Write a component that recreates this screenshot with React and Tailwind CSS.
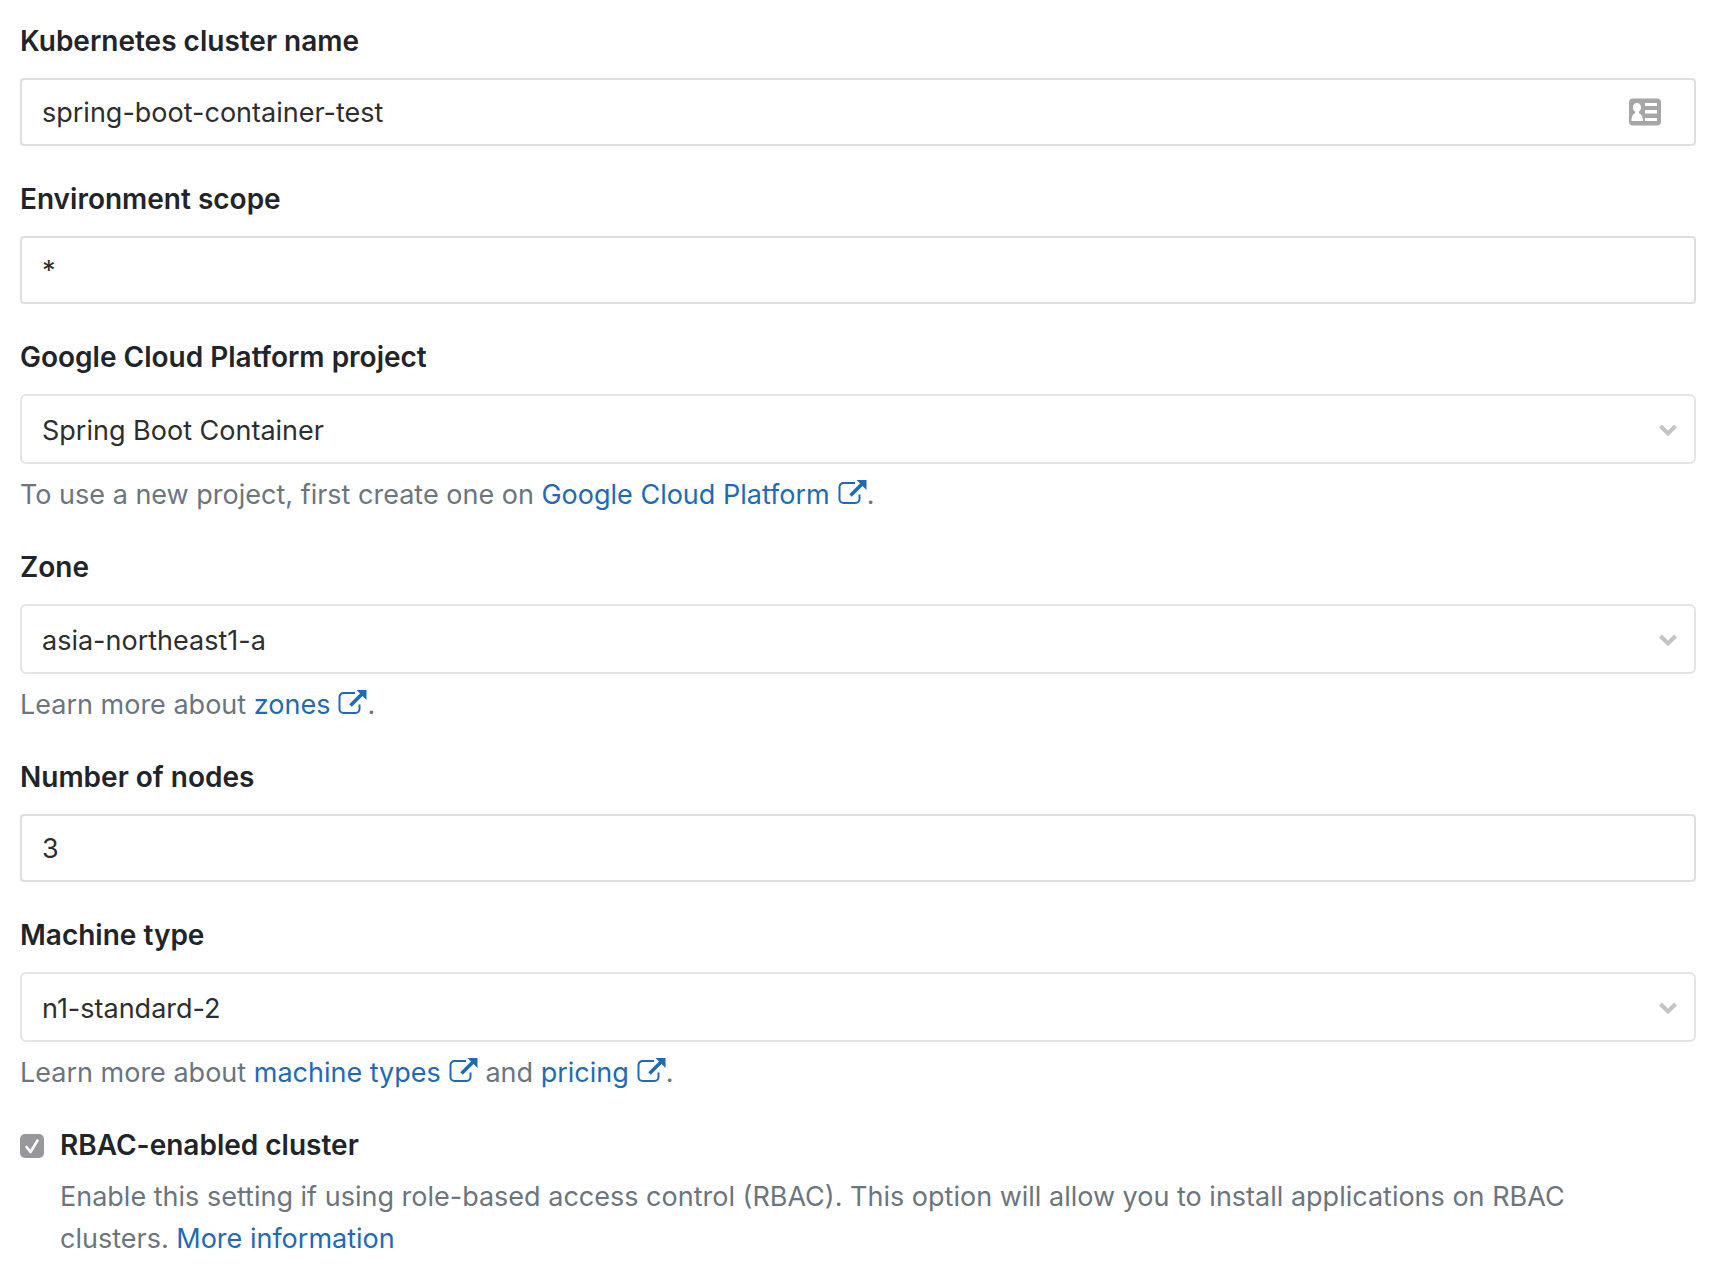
import React from "react";

function ExternalIcon() {
  return (
    <svg
      className="ml-2 inline-block h-7 w-[29px] align-[-3px]"
      viewBox="0 0 29 28"
      fill="none"
      aria-hidden="true"
    >
      <path
        d="M17 4H5.500A4 4 0 0 0 1.500 8v12a4 4 0 0 0 4 4H17.500a4 4 0 0 0 4-4v-4.500"
        stroke="currentColor"
        strokeWidth="2"
      />
      <path d="M12.500 16.500L24 5" stroke="currentColor" strokeWidth="3.600" />
      <path d="M18.500 1h10v10z" fill="currentColor" />
    </svg>
  );
}

function Link({ href, external, children }) {
  return (
    <a href={href} className="text-[#1f6ab6] hover:underline">
      {children}
      {external && <ExternalIcon />}
    </a>
  );
}

function Field({ id, label, help, children }) {
  return (
    <div className="flex flex-col">
      <label
        htmlFor={id}
        className="mb-4 self-start text-[28px] font-semibold text-[#212529]"
      >
        {label}
      </label>
      {children}
      {help && <p className="mt-3 leading-[38px] text-[#6c757d]">{help}</p>}
    </div>
  );
}

function TextInput({ id, value }) {
  return (
    <input
      id={id}
      type="text"
      defaultValue={value}
      className="block h-[68px] w-full rounded border-2 border-[#dfdfdf] bg-white px-5 text-[#2e2e2e] outline-none"
    />
  );
}

function SelectInput({ id, value }) {
  return (
    <div className="relative">
      <select
        id={id}
        defaultValue={value}
        className="block h-[70px] w-full appearance-none rounded-md border-2 border-[#e5e5e5] bg-white px-5 pt-1 text-[#2e2e2e] outline-none"
      >
        <option>{value}</option>
      </select>
      <svg
        className="pointer-events-none absolute top-7 right-4 h-4 w-6"
        viewBox="0 0 24 16"
        fill="none"
        aria-hidden="true"
      >
        <path d="M4.500 4L12 11.400L19.500 4" stroke="#c4c4c4" strokeWidth="4" />
      </svg>
    </div>
  );
}

function ContactCardIcon() {
  return (
    <svg
      className="pointer-events-none absolute top-5 right-[35px] h-7 w-8"
      viewBox="0 0 32 28"
      aria-hidden="true"
    >
      <rect y="0.500" width="32" height="27" rx="4" fill="#a6a6a6" />
      <path
        d="M8 5C5.400 5 4 6.900 4 9.400c0 1.900.8 3.300 2 4.200v1.600C3.900 16.300 2.500 18.500 2.500 23h11.500c0-4.500-1.900-6.700-4-7.800v-1.600c1.200-.9 2-2.300 2-4.200C12 6.900 10.600 5 8 5z"
        fill="#fff"
      />
      <path d="M16 5h12v3H16zM16 12h12v3.500H16zM16 20h12v3H16z" fill="#fff" />
    </svg>
  );
}

export default function App() {
  return (
    <form className="flex min-h-screen flex-col gap-8 bg-white p-5 pb-3 font-['Inter',sans-serif] text-[27px] leading-[42px]">
      <Field id="name" label="Kubernetes cluster name">
        <div className="relative">
          <TextInput id="name" value="spring-boot-container-test" />
          <ContactCardIcon />
        </div>
      </Field>

      <Field id="scope" label="Environment scope">
        <TextInput id="scope" value="*" />
      </Field>

      <Field
        id="project"
        label="Google Cloud Platform project"
        help={
          <>
            To use a new project, first create one on{" "}
            <Link href="#gcp" external>Google Cloud Platform</Link>.
          </>
        }
      >
        <SelectInput id="project" value="Spring Boot Container" />
      </Field>

      <Field
        id="zone"
        label="Zone"
        help={
          <>
            Learn more about <Link href="#zones" external>zones</Link>.
          </>
        }
      >
        <SelectInput id="zone" value="asia-northeast1-a" />
      </Field>

      <Field id="nodes" label="Number of nodes">
        <TextInput id="nodes" value="3" />
      </Field>

      <Field
        id="machine"
        label="Machine type"
        help={
          <>
            Learn more about <Link href="#machine-types" external>machine types</Link> and{" "}
            <Link href="#pricing" external>pricing</Link>.
          </>
        }
      >
        <SelectInput id="machine" value="n1-standard-2" />
      </Field>

      <div className="flex items-start gap-4 pr-12">
        <div className="relative mt-[10px] h-6 w-6 shrink-0">
          <input
            id="rbac"
            type="checkbox"
            defaultChecked
            className="block h-6 w-6 appearance-none rounded-[5px] bg-[#98979c]"
          />
          <svg
            className="pointer-events-none absolute inset-0 h-6 w-6"
            viewBox="0 0 24 24"
            fill="none"
            aria-hidden="true"
          >
            <path
              d="M6.500 13L10.500 18L17.500 6.500"
              stroke="#fff"
              strokeWidth="2.600"
              strokeLinecap="round"
              strokeLinejoin="round"
            />
          </svg>
        </div>
        <div className="flex flex-col">
          <label
            htmlFor="rbac"
            className="self-start text-[28px] font-semibold text-[#212529]"
          >
            RBAC-enabled cluster
          </label>
          <p className="mt-2.5 text-[#6c757d]">
            Enable this setting if using role-based access control (RBAC). This option will allow
            you to install applications on RBAC clusters. <Link href="#rbac">More information</Link>
          </p>
        </div>
      </div>
    </form>
  );
}
